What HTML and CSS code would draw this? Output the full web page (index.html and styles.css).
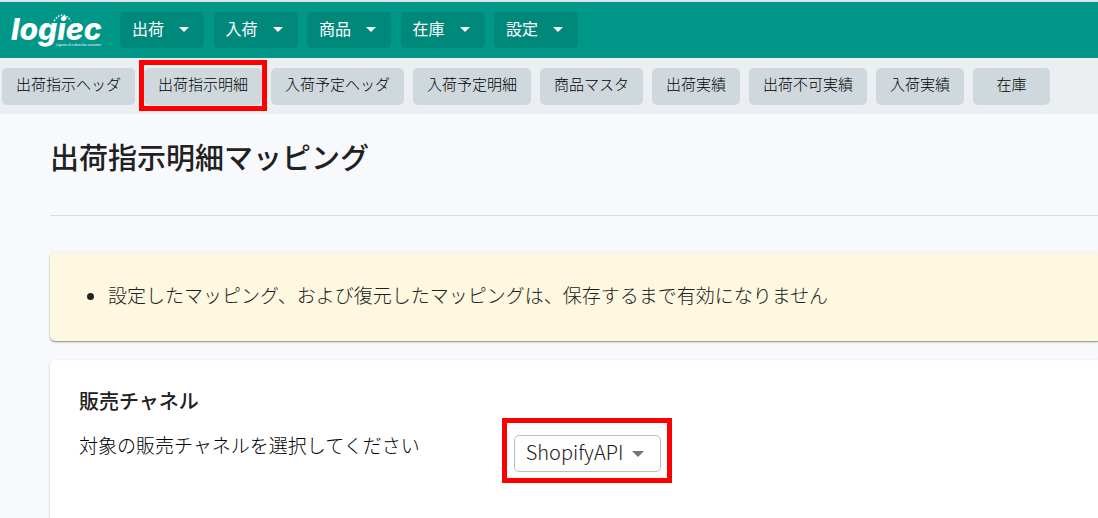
FILE: index.html
```html
<!DOCTYPE html>
<html lang="ja">
<head>
<meta charset="utf-8">
<meta name="viewport" content="width=device-width, initial-scale=1">
<title>出荷指示明細マッピング</title>
<link rel="stylesheet" href="styles.css">
</head>
<body>
<header class="topbar">
  <a class="logo" href="#" aria-label="logiec">
    <svg class="logo-art" viewBox="0 0 92 36" aria-hidden="true">
      <text class="logo-word" x="1" y="28">logiec</text>
      <path class="logo-arc" d="M44 9Q52 -3 61 9"/>
      <text class="logo-tag" x="46" y="34">Logistics &amp; e-direct bus consumer</text>
    </svg>
  </a>
  <nav class="menu">
    <button class="menu-button" type="button">出荷<span class="caret"></span></button>
    <button class="menu-button" type="button">入荷<span class="caret"></span></button>
    <button class="menu-button" type="button">商品<span class="caret"></span></button>
    <button class="menu-button" type="button">在庫<span class="caret"></span></button>
    <button class="menu-button" type="button">設定<span class="caret"></span></button>
  </nav>
</header>
<nav class="tabs">
  <button class="tab" type="button">出荷指示ヘッダ</button>
  <button class="tab tab-marked" type="button">出荷指示明細</button>
  <button class="tab" type="button">入荷予定ヘッダ</button>
  <button class="tab" type="button">入荷予定明細</button>
  <button class="tab" type="button">商品マスタ</button>
  <button class="tab" type="button">出荷実績</button>
  <button class="tab" type="button">出荷不可実績</button>
  <button class="tab" type="button">入荷実績</button>
  <button class="tab" type="button">在庫</button>
</nav>
<main class="content">
  <h1 class="title">出荷指示明細マッピング</h1>
  <hr class="divider">
  <ul class="notice">
    <li>設定したマッピング、および復元したマッピングは、保存するまで有効になりません</li>
  </ul>
  <section class="card">
    <div class="card-text">
      <h2 class="card-title">販売チャネル</h2>
      <label class="card-label" for="channel">対象の販売チャネルを選択してください</label>
    </div>
    <div class="select-mark">
      <div class="select-box">
        <select class="select" id="channel"><option>ShopifyAPI</option></select>
      </div>
    </div>
  </section>
</main>
</body>
</html>
```

FILE: styles.css
```css
* { box-sizing: border-box; }

body {
  margin: 0;
  min-height: 100vh;
  overflow: hidden;
  background: #f8f9fd;
  color: #212121;
  font-family: "Noto Sans CJK JP", sans-serif;
  font-size: 19px;
  font-weight: 300;
}

button, select { font: inherit; }

.topbar {
  display: flex;
  align-items: center;
  height: 58px;
  padding-left: 10px;
  border-top: 2px solid #dee1e6;
  background: #009688;
}

.logo { display: block; width: 92px; height: 36px; margin-right: 18px; }
.logo-art { display: block; width: 92px; height: 36px; overflow: visible; fill: #fff; }
.logo-word { font: italic 800 30px Inter, sans-serif; }
.logo-tag { font: italic 400 3px "Liberation Sans", sans-serif; }
.logo-arc { fill: none; stroke: #fff; stroke-width: 1.5; stroke-dasharray: 1.5 1.5; }

.menu {
  display: flex;
  justify-content: space-between;
  width: 458px;
}

.menu-button {
  display: flex;
  align-items: center;
  justify-content: space-between;
  width: 84px;
  height: 36px;
  padding: 0 15px 5px 12px;
  border: 0;
  border-radius: 5px;
  background: #00897b;
  color: #fff;
  font-size: 16px;
  font-weight: 400;
}

.caret {
  margin-top: 4px;
  border: 5px solid transparent;
  border-top-color: currentColor;
  border-bottom: 0;
}

.tabs {
  display: flex;
  gap: 9px;
  padding: 10px 2px 9px;
  background: #eceff1;
}

.tab {
  position: relative;
  flex: none;
  min-width: 77px;
  height: 37px;
  padding: 0 14px 7px;
  border: 0;
  border-radius: 5px;
  background: #cfd8dc;
  color: #000;
  font-size: 15px;
  white-space: nowrap;
}

.tab-marked::after {
  content: "";
  position: absolute;
  inset: -8px -5px -6px;
  border: 5px solid #f00;
}

.content { padding: 22px 0 0 50px; }

.title {
  margin: 0;
  font-size: 29px;
  font-weight: 500;
  line-height: 40px;
}

.divider {
  height: 1px;
  margin: 39px 0 37px;
  border: 0;
  background: #d9dbdf;
}

.notice {
  margin: 0 0 19px;
  padding: 26px 20px 30px 58px;
  border-radius: 5px 0 0 5px;
  background: #fff8e1;
  box-shadow: 0 1px 1px #999, 0 1px 3px rgba(0, 0, 0, .2);
  line-height: 32px;
}

.card {
  display: flex;
  gap: 82px;
  min-height: 180px;
  padding: 25px 29px;
  border-radius: 5px 0 0 5px;
  background: #fff;
  box-shadow: 0 1px 3px rgba(0, 0, 0, .2);
}

.card-title {
  margin: 0 0 12px;
  font-size: 20px;
  font-weight: 500;
  line-height: 32px;
}

.card-label { display: block; color: #000; line-height: 32px; }

.select-mark {
  align-self: flex-start;
  margin-top: 33px;
  padding: 12px 6px 6px 7px;
  border: 5px solid #f00;
}

.select-box { position: relative; width: 147px; }

.select-box::after {
  content: "";
  position: absolute;
  top: 16px;
  right: 17px;
  border: 6px solid transparent;
  border-top-color: #757575;
  border-bottom: 0;
  pointer-events: none;
}

.select {
  width: 100%;
  height: 37px;
  padding: 0 11px 5px;
  border: 1px solid #bdbdbd;
  border-radius: 5px;
  background: #fff;
  color: #212121;
  font-size: 20px;
  appearance: none;
}
```
